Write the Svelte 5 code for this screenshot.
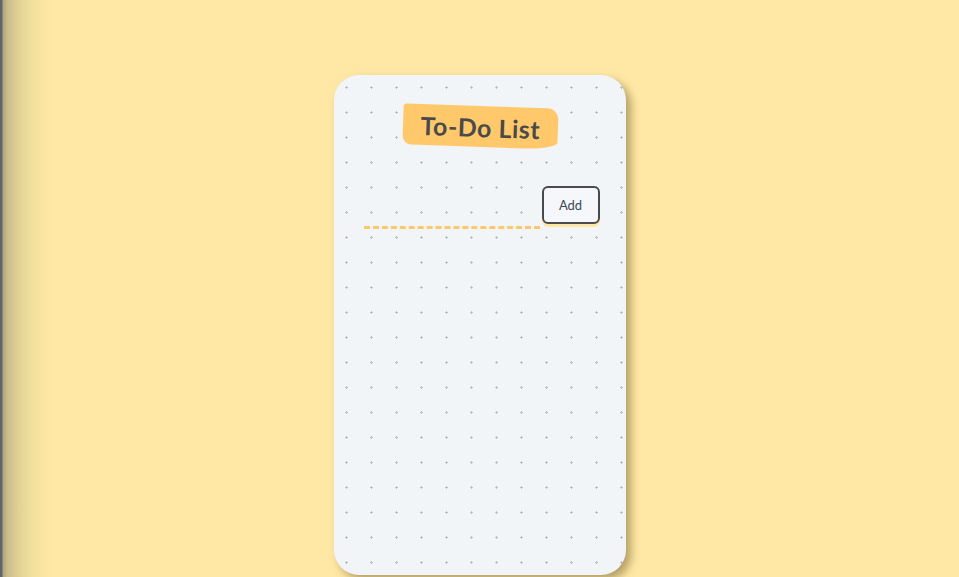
<script>
	let task = $state('');
</script>

<main class="page">
	<section class="card">
		<h1>To-Do List</h1>
		<form class="add-row" onsubmit={(e) => e.preventDefault()}>
			<input type="text" bind:value={task} aria-label="New task" />
			<button type="submit">Add</button>
		</form>
	</section>
</main>

<style>
	:global(body) {
		margin: 0;
		overflow: hidden;
	}

	.page {
		box-sizing: border-box;
		height: 577px;
		padding-top: 75px;
		display: flex;
		justify-content: center;
		background:
			linear-gradient(90deg, #5b676c 0, #5b676c 2px, #b0a47a 3px, #cdbe8c 8px, #e0d095 18px, #f2e09e 32px, #fbe5a3 44px, #ffe8a5 56px);
	}

	.card {
		box-sizing: border-box;
		width: 292px;
		height: 500px;
		padding: 30px 26px 30px 30px;
		border-radius: 25px;
		background-color: #f1f5f8;
		background-image: radial-gradient(circle at center, #b4b8bb 0.9px, transparent 1.4px);
		background-size: 25px 25px;
		box-shadow: 5px 5px 8px rgba(110, 90, 40, 0.5);
	}

	h1 {
		box-sizing: border-box;
		width: 155px;
		height: 41px;
		margin: 1px auto 39px;
		transform: translateX(-1px) rotate(2deg);
		display: flex;
		align-items: center;
		justify-content: center;
		background: #ffc96b;
		border-radius: 3px 11px 34px 9px / 3px 11px 7px 9px;
		color: #4a4a4a;
		font-family: 'Lato', sans-serif;
		font-size: 25px;
		font-weight: 700;
		letter-spacing: 0.5px;
	}

	.add-row {
		display: flex;
		align-items: flex-end;
		gap: 2px;
	}

	input {
		flex: 1;
		min-width: 0;
		height: 32px;
		box-sizing: border-box;
		padding: 0;
		margin-bottom: -5px;
		border: 0;
		border-bottom: 3px dashed #ffc96b;
		background: transparent;
		outline: none;
	}

	button {
		box-sizing: border-box;
		width: 58px;
		height: 38px;
		padding: 0;
		border: 2px solid #4a4a4a;
		border-radius: 6px;
		background: #f5f7fa;
		box-shadow: 0 3px 0 #ffe8a5;
		color: #3a4a55;
		font-family: 'Lato', sans-serif;
		font-size: 13px;
	}
</style>
